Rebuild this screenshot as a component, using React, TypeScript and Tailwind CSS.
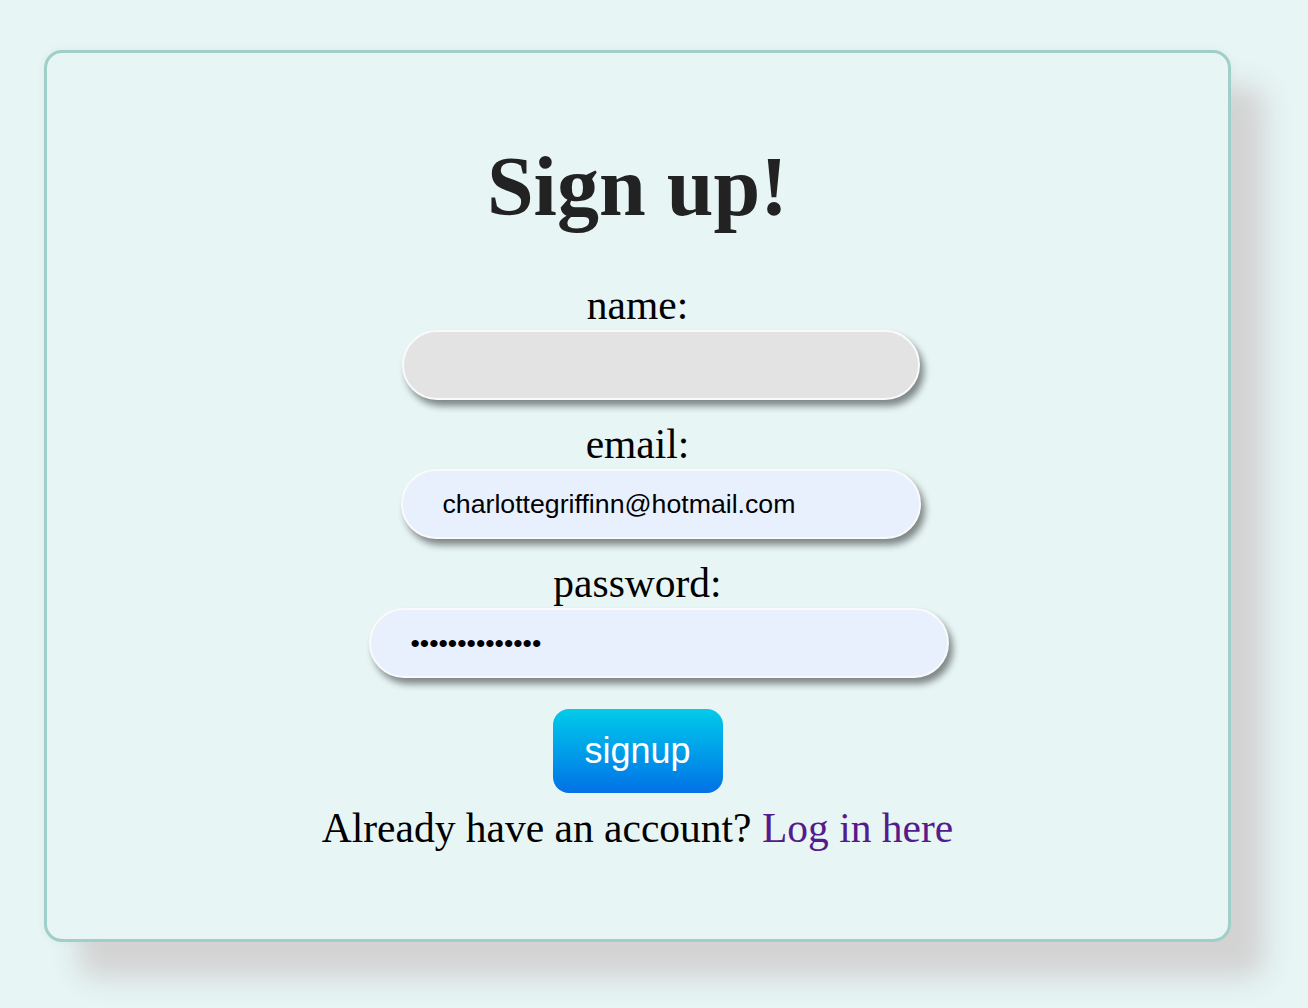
import React from 'react';

const serif = "font-['Liberation_Serif','Times_New_Roman',serif]";
const sans = "font-['Liberation_Sans',Arial,sans-serif]";

const field = `mt-[3px] h-[70px] rounded-full border-2 border-[#fafafa] px-10 text-[26.7px] text-black outline-none shadow-[4px_6px_7px_rgba(0,0,0,0.45)] ${sans}`;

export default function App() {
    return (
        <div className={`min-h-[1008px] w-full bg-[#e7f5f5] pt-[50px] pl-[44px] pr-[77px] pb-[60px] ${serif}`}>
            <div className="flex flex-col items-center rounded-[18px] border-[3px] border-[#a0cfc9] bg-[#e7f5f5] pt-[92px] pb-[89px] shadow-[34px_36px_28px_#d3d3d3,0_0_10px_rgba(0,0,0,0.05)]">
                <h1 className="text-[84px] font-bold leading-none text-[#222]">Sign up!</h1>

                <form className="mt-[54px] flex flex-col items-center" onSubmit={e => e.preventDefault()}>
                    <label className="block text-[41.5px] leading-[44px] text-black">name:</label>
                    <input type="text" className={`${field} ml-[46px] w-[518px] bg-[#e3e3e3]`} />

                    <label className="mt-[22px] block text-[41.5px] leading-[44px] text-black">email:</label>
                    <input
                        type="email"
                        readOnly
                        defaultValue="charlottegriffinn@hotmail.com"
                        className={`${field} ml-[46px] w-[520px] bg-[#e8f0fe]`}
                    />

                    <label className="mt-[22px] block text-[41.5px] leading-[44px] text-black">password:</label>
                    <input
                        type="password"
                        readOnly
                        defaultValue="charlotte12345"
                        className={`${field} ml-[42px] w-[580px] bg-[#e8f0fe]`}
                    />

                    <button
                        type="submit"
                        className={`mt-[31px] h-[84px] w-[170px] rounded-2xl bg-gradient-to-b from-[#08cbe9] to-[#0770e6] text-[36px] text-white ${sans}`}
                    >
                        signup
                    </button>
                </form>

                <p className="mt-[13px] text-[41.5px] leading-[44px] text-black">
                    Already have an account? <a href="#" className="text-[#551a8b]">Log in here</a>
                </p>
            </div>
        </div>
    );
}
